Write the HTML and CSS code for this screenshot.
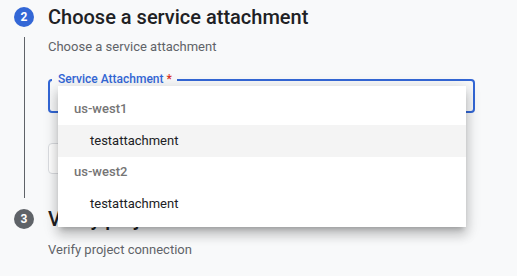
FILE: index.html
```html
<!DOCTYPE html>
<html>
<head>
<meta charset="utf-8">
<link rel="stylesheet" href="styles.css">
</head>
<body>
<div class="stepper">
  <div class="step step-active">
    <div class="rail">
      <div class="badge badge-blue">2</div>
      <div class="line"></div>
    </div>
    <div class="content">
      <div class="title">Choose a service attachment</div>
      <div class="subtitle">Choose a service attachment</div>
      <div class="field">
        <span class="label">Service Attachment <span class="req">*</span></span>
        <div class="menu">
          <div class="group">us-west1</div>
          <div class="option option-hover">testattachment</div>
          <div class="group">us-west2</div>
          <div class="option">testattachment</div>
        </div>
      </div>
      <div class="button"></div>
    </div>
  </div>
  <div class="step">
    <div class="rail">
      <div class="badge badge-gray">3</div>
    </div>
    <div class="content">
      <div class="title">Verify project connection</div>
      <div class="subtitle subtitle-last">Verify project connection</div>
    </div>
  </div>
</div>
</body>
</html>
```

FILE: styles.css
```css
html, body {
  margin: 0;
  padding: 0;
  background: #f8f9fa;
  font-family: Roboto, "Liberation Sans", Arial, sans-serif;
  color: #202124;
  overflow: hidden;
}
.stepper {
  padding-top: 7px;
}
.step {
  display: grid;
  grid-template-columns: 48px 1fr;
}
.step-active {
  padding-bottom: 35px;
}
.rail {
  display: flex;
  flex-direction: column;
  align-items: center;
}
.badge {
  width: 20px;
  height: 20px;
  border-radius: 50%;
  color: #fff;
  font-size: 12px;
  font-weight: 700;
  line-height: 20px;
  text-align: center;
  flex: none;
}
.badge-blue { background: #3367d6; }
.badge-gray { background: #5f6368; }
.line {
  flex: 1;
  width: 1px;
  background: #5f6368;
  margin: 10px 0 -24px;
}
.content {
  position: relative;
}
.title {
  font-size: 20px;
  font-weight: 500;
  line-height: 20px;
  height: 20px;
  white-space: nowrap;
}
.subtitle {
  margin-top: 12px;
  font-size: 13px;
  line-height: 16px;
  color: #5f6368;
}
.subtitle-last {
  margin-top: 13px;
}
.field {
  position: relative;
  margin-top: 24px;
  width: 427px;
  height: 34px;
  box-sizing: border-box;
  border: 2px solid #3367d6;
  border-radius: 4px;
  z-index: 2;
}
.label {
  position: absolute;
  top: -9px;
  left: 2px;
  padding: 0 5px 0 6px;
  background: #f8f9fa;
  color: #3367d6;
  font-size: 12px;
  font-weight: 500;
  line-height: 14px;
  white-space: nowrap;
}
.req { color: #d93025; }
.menu {
  position: absolute;
  left: 8px;
  top: 5px;
  width: 408px;
  background: #fff;
  padding: 8px 0 7px;
  box-shadow: 0 5px 5px -3px rgba(0,0,0,.2), 0 8px 10px 1px rgba(0,0,0,.14), 0 3px 14px 2px rgba(0,0,0,.12);
}
.group {
  height: 31px;
  line-height: 29px;
  padding-left: 16px;
  font-size: 13px;
  font-weight: 500;
  color: #757575;
}
.option {
  height: 32px;
  line-height: 32px;
  padding-left: 32px;
  font-size: 13px;
  color: #202124;
}
.option-hover { background: #f4f4f4; }
.button {
  margin-top: 30px;
  width: 90px;
  height: 31px;
  box-sizing: border-box;
  border: 1px solid #dadce0;
  border-radius: 4px;
  background: #fff;
}
```
